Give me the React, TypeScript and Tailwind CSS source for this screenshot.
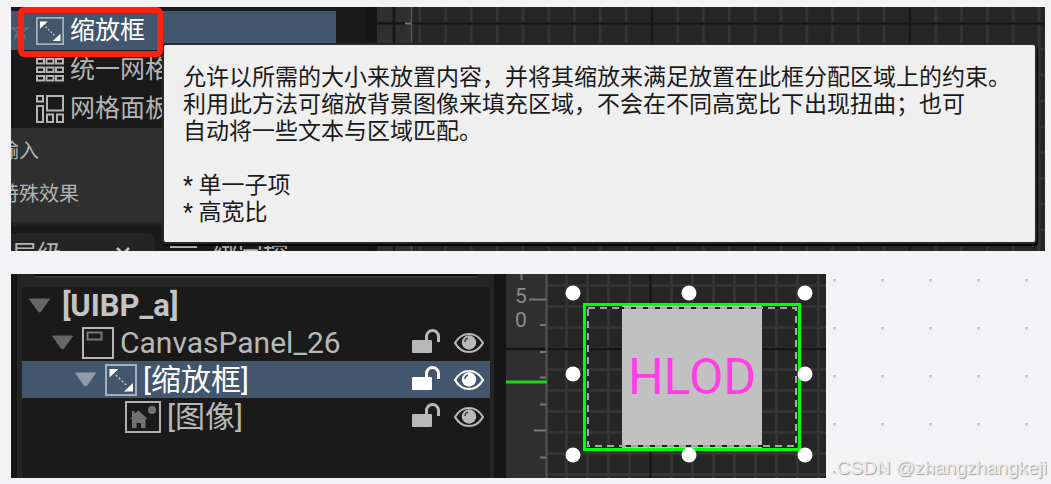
import type { ReactNode } from "react";

const CJK = "font-['Roboto','Noto_Sans_CJK_SC',sans-serif]";

function ScaleBoxIcon({ className }: { className: string }) {
  return (
    <svg viewBox="0 0 32 32" className={className} fill="none" aria-hidden="true">
      <rect x="1" y="1" width="30" height="30" stroke="#a3afbc" strokeWidth="2" />
      <path d="M4.500 5h9l-9 8.500zM28 27.500h-9l9-8.500z" fill="#fff" />
      <path d="M11 11l11 11" stroke="#c3cbd3" strokeWidth="1.500" strokeDasharray="2 2" />
    </svg>
  );
}

function UniformGridIcon() {
  return (
    <svg viewBox="0 0 28 28" className="h-7 w-7 shrink-0" fill="none" stroke="#b4b4b4" strokeWidth="2" aria-hidden="true">
      {[3, 11.5, 20].map((y) =>
        [1, 10.5, 20].map((x) => (
          <rect key={`${x}-${y}`} x={x} y={y} width="7" height="4.5" />
        )),
      )}
    </svg>
  );
}

function GridPanelIcon() {
  return (
    <svg viewBox="0 0 28 28" className="h-7 w-7 shrink-0" fill="none" stroke="#b4b4b4" strokeWidth="2" aria-hidden="true">
      <rect x="1" y="1" width="6" height="5.500" />
      <rect x="11" y="1" width="16" height="14.500" />
      <rect x="1" y="11" width="6" height="16" />
      <rect x="11" y="19.500" width="6" height="7.500" />
      <rect x="21" y="19.500" width="6" height="7.500" />
    </svg>
  );
}

function CanvasPanelIcon() {
  return (
    <svg viewBox="0 0 32 32" className="h-8 w-8 shrink-0" fill="none" aria-hidden="true">
      <rect x="1" y="1" width="30" height="30" stroke="#b8b8b8" strokeWidth="2" />
      <rect x="5.500" y="5.500" width="14" height="7" stroke="#777" strokeWidth="2" />
    </svg>
  );
}

function ImageIcon() {
  return (
    <svg viewBox="0 0 36 32" className="h-8 w-9 shrink-0" fill="none" aria-hidden="true">
      <rect x="1" y="1" width="34" height="30" stroke="#b0b0b0" strokeWidth="2" />
      <g fill="#727272">
        <circle cx="27" cy="9" r="4" />
        <path d="M13.500 9.500l9 8.500h-2v9h-4.500v-5h-4.500v5H7V18H5l2-2v-6h2.500v3z" />
      </g>
    </svg>
  );
}

function UnlockIcon() {
  return (
    <svg viewBox="0 0 28 26" className="h-[26px] w-7" fill="none" aria-hidden="true">
      <rect x="0" y="12" width="20" height="13" rx="1" fill="currentColor" />
      <path d="M14.500 13V8.500a6 6 0 0 1 12 0V14" stroke="currentColor" strokeWidth="3" />
    </svg>
  );
}

function EyeIcon({ selected }: { selected?: boolean }) {
  return (
    <svg viewBox="0 0 30 22" className="h-[22px] w-[30px]" fill="none" aria-hidden="true">
      <path d="M1 11C8-1 22-1 29 11 22 23 8 23 1 11z" stroke="currentColor" strokeWidth="2.200" />
      <circle cx="15" cy="10.500" r="7.200" fill="currentColor" />
      <path d="M11 10a4 4 0 0 1 3-4" stroke={selected ? "#42566e" : "#444"} strokeWidth="1.500" />
    </svg>
  );
}

function PaletteRow({ icon, label }: { icon: ReactNode; label: string }) {
  return (
    <li className="flex h-[39px] items-center gap-1.5 pl-[25px] text-[#b4b4b4]">
      {icon}
      <span className="whitespace-nowrap text-[25px] leading-8">{label}</span>
    </li>
  );
}

function Palette() {
  return (
    <div className="w-[366px] shrink-0 overflow-hidden border-r-[10px] border-[#151515] bg-[#1a1a1a] pt-1">
      <ul>
        <li className="mr-[31px] flex h-[39px] items-center gap-1.5 bg-[#42566e] text-white">
          <svg viewBox="0 0 19 19" className="h-[19px] w-[19px] shrink-0" fill="none" stroke="#66717c" strokeWidth="1.500" aria-hidden="true">
            <path d="M9 2l2 5h6l-5 4 2 6-5-4-5 4 2-6-5-4h6z" />
          </svg>
          <ScaleBoxIcon className="h-7 w-7 shrink-0" />
          <span className="text-[25px] leading-8">缩放框</span>
        </li>
        <PaletteRow icon={<UniformGridIcon />} label="统一网格面板" />
        <PaletteRow icon={<GridPanelIcon />} label="网格面板" />
      </ul>
      <div className="bg-[#2f2f2f] pb-1.5 pt-0.5 text-[20px] text-[#b4b4b4] shadow-[0_2px_4px_#2f2f2f]">
        <div className="-ml-3 leading-[43px]">输入</div>
        <div className="-ml-3 leading-[43px]">特殊效果</div>
      </div>
      <div className="mt-[11px] flex h-[18px] overflow-hidden text-[25px] leading-[44px] text-[#b4b4b4]">
        <div className="flex w-36 shrink-0 justify-between rounded-tr-lg bg-[#242424] pl-px pr-6">
          <span>层级</span>
          <svg viewBox="0 0 16 18" className="h-[18px] w-4" stroke="#c8c8c8" strokeWidth="2.500" aria-hidden="true">
            <path d="M2 15l12 12M14 15L2 27" />
          </svg>
        </div>
        <div className="flex gap-4 pl-[15px]">
          <svg viewBox="0 0 27 18" className="h-[18px] w-[27px]" stroke="#b4b4b4" strokeWidth="2" aria-hidden="true">
            <path d="M0 14h27" />
          </svg>
          <span>绑定控</span>
        </div>
      </div>
    </div>
  );
}

function DesignerGrid() {
  return (
    <svg className="h-full w-full" aria-hidden="true">
      <defs>
        <pattern id="cell-lg" x="15.700" y="15.300" width="25.800" height="25.800" patternUnits="userSpaceOnUse">
          <path d="M0 0H25.800M0 0V25.800" stroke="#363636" strokeWidth="5" />
        </pattern>
        <pattern id="major-lg" x="15.700" y="15.300" width="258" height="258" patternUnits="userSpaceOnUse">
          <path d="M0 0H258M0 0V258" stroke="#151515" strokeWidth="5" />
        </pattern>
      </defs>
      <rect width="100%" height="100%" fill="#262626" />
      <rect width="100%" height="100%" fill="url(#cell-lg)" />
      <rect width="34" height="100%" fill="#2f2f2f" />
      <rect width="100%" height="100%" fill="url(#major-lg)" />
      <path d="M34.500 0V244" stroke="#555" strokeWidth="1.500" />
      <path d="M28 16.500h6" stroke="#777" strokeWidth="2" />
    </svg>
  );
}

function Tooltip() {
  return (
    <div
      role="tooltip"
      className="absolute left-[153px] right-2.5 top-[38px] rounded-[2px] bg-[#efefef] pb-4 pl-[19px] pt-[19px] text-[23px] leading-[27px] text-[#1a1a1a] shadow-[0_0_0_2px_#2a2a2a,1px_2px_1px_2px_#000]"
    >
      <p className="whitespace-nowrap">
        允许以所需的大小来放置内容，并将其缩放来满足放置在此框分配区域上的约束。
        <br />
        利用此方法可缩放背景图像来填充区域，不会在不同高宽比下出现扭曲；也可
        <br />
        自动将一些文本与区域匹配。
      </p>
      <ul className="mt-[27px]">
        <li>* 单一子项</li>
        <li>* 高宽比</li>
      </ul>
    </div>
  );
}

function Arrow({ selected }: { selected?: boolean }) {
  return (
    <svg viewBox="0 0 23 15" className="h-[15px] w-[23px] shrink-0" aria-hidden="true">
      <path d="M1.500 1h20L13 13q-1.500 2-3 0z" fill={selected ? "#929ca8" : "#666"} stroke={selected ? "#929ca8" : "#666"} strokeLinejoin="round" />
    </svg>
  );
}

function TreeRow({
  indent,
  icon,
  label,
  selected,
}: {
  indent: string;
  icon: ReactNode;
  label: string;
  selected?: boolean;
}) {
  return (
    <li
      className={`flex h-[37px] items-center pr-1.5 ${indent} ${
        selected ? "bg-[#42566e] text-white" : "text-[#b8b8b8]"
      }`}
    >
      {icon}
      <span className="ml-1.5 whitespace-nowrap text-[30px] leading-9">{label}</span>
      <button type="button" aria-label="锁定" className="mb-1 ml-auto">
        <UnlockIcon />
      </button>
      <button type="button" aria-label="可视性" className="ml-3.5">
        <EyeIcon selected={selected} />
      </button>
    </li>
  );
}

function Hierarchy() {
  return (
    <div className="w-[495px] shrink-0 border-l-[6px] border-r-[12px] border-[#151515] bg-[#242424] pl-[5px] pr-1">
      <div className="h-[13px] px-3">
        <div className="h-1 rounded-b-lg border-b-2 border-[#363636] bg-[#0f0f0f]" />
      </div>
      <ul className="bg-[#1a1a1a] pb-[43px]">
        <li className="flex h-[37px] items-center pl-1.5">
          <Arrow />
          <span className="ml-[11px] text-[31px] font-bold leading-9 text-[#c4c4c4]">[UIBP_a]</span>
        </li>
        <TreeRow
          indent="pl-[29px]"
          label="CanvasPanel_26"
          icon={
            <span className="flex items-center gap-2">
              <Arrow />
              <CanvasPanelIcon />
            </span>
          }
        />
        <TreeRow
          selected
          indent="pl-[52px]"
          label="[缩放框]"
          icon={
            <span className="flex items-center gap-2">
              <Arrow selected />
              <ScaleBoxIcon className="h-8 w-8 shrink-0" />
            </span>
          }
        />
        <TreeRow indent="pl-[103px]" label="[图像]" icon={<ImageIcon />} />
      </ul>
    </div>
  );
}

const HANDLES = [
  "left-0 top-0",
  "left-1/2 top-0",
  "left-full top-0",
  "left-0 top-1/2",
  "left-full top-1/2",
  "left-0 top-full",
  "left-1/2 top-full",
  "left-full top-full",
];

function Designer() {
  return (
    <div className="relative w-[320px] shrink-0 overflow-hidden">
      <svg className="absolute inset-0 h-full w-full" aria-hidden="true">
        <defs>
          <pattern id="cell-sm" x="50" y="1" width="21" height="21" patternUnits="userSpaceOnUse">
            <path d="M10.500 0V21M0 10.500H21" stroke="#363636" strokeWidth="2.500" />
          </pattern>
        </defs>
        <rect width="100%" height="100%" fill="#262626" />
        <rect width="100%" height="100%" fill="url(#cell-sm)" />
        <rect width="41" height="100%" fill="#2f2f2f" />
        <path d="M0 75H320M144.500 0V204" stroke="#151515" strokeWidth="2.500" />
        <path d="M40.500 0V204" stroke="#555" strokeWidth="2" />
        <path d="M23 25.500h17M34 51h6M34 78h6M34 103.500h6M34 130.500h6M28 156.500h12M34 183.500h6M15.500 0v6" stroke="#777" strokeWidth="2" />
        <path d="M0 108h41" stroke="#1bd51b" strokeWidth="3" />
      </svg>
      <div className="absolute left-[9px] top-2.5 text-[21px] leading-6 text-[#8a8a8a]">
        5<br />0
      </div>
      <div className="absolute left-[77px] top-[29px] flex h-[148px] w-[218px] justify-center border-[3px] border-[#00ff0a]">
        <div className="flex h-full w-[140px] items-center justify-center bg-[#c1c1c1] text-[50px] text-[#ff3fe6]">
          HLOD
        </div>
        <svg className="absolute inset-0 h-full w-full" aria-hidden="true">
          <rect x="2" y="2" width="208" height="138" fill="none" stroke="#222" strokeWidth="2" />
          <rect x="2" y="2" width="208" height="138" fill="none" stroke="#a5a5a5" strokeWidth="2" strokeDasharray="7 5" />
        </svg>
      </div>
      <div className="absolute left-[67px] top-[19px] h-[162px] w-[232px]">
        {HANDLES.map((place) => (
          <span
            key={place}
            className={`absolute h-[15px] w-[15px] -translate-x-1/2 -translate-y-1/2 rounded-full bg-white ${place}`}
          />
        ))}
      </div>
    </div>
  );
}

export default function App() {
  return (
    <main className={`flex min-h-screen flex-col gap-[23px] bg-[#f3f3f5] pb-1.5 pl-[11px] pt-[7px] ${CJK}`}>
      <section className="relative mr-1.5 flex overflow-hidden">
        <Palette />
        <div className="relative min-w-0 flex-1">
          <div className="absolute inset-0">
            <DesignerGrid />
          </div>
        </div>
        <Tooltip />
        <div className="absolute left-[7px] top-0 h-[50px] w-[145px] rounded-md border-[6px] border-[#fb2113]" />
      </section>
      <section className="flex">
        <Hierarchy />
        <Designer />
        <div className="relative flex min-w-0 flex-1 items-end justify-end">
          <svg className="absolute inset-0 h-full w-full" aria-hidden="true">
            <defs>
              <pattern id="dots" x="7" y="5" width="48" height="48" patternUnits="userSpaceOnUse">
                <rect width="3" height="3" fill="#cdcdcf" />
              </pattern>
            </defs>
            <rect width="100%" height="100%" fill="url(#dots)" />
          </svg>
          <p className="relative whitespace-nowrap pr-1 font-['Liberation_Sans',sans-serif] text-[19px] leading-5 text-[#ececec] [text-shadow:1px_1px_1px_#9a9a9a]">
            CSDN @zhangzhangkeji
          </p>
        </div>
      </section>
    </main>
  );
}
